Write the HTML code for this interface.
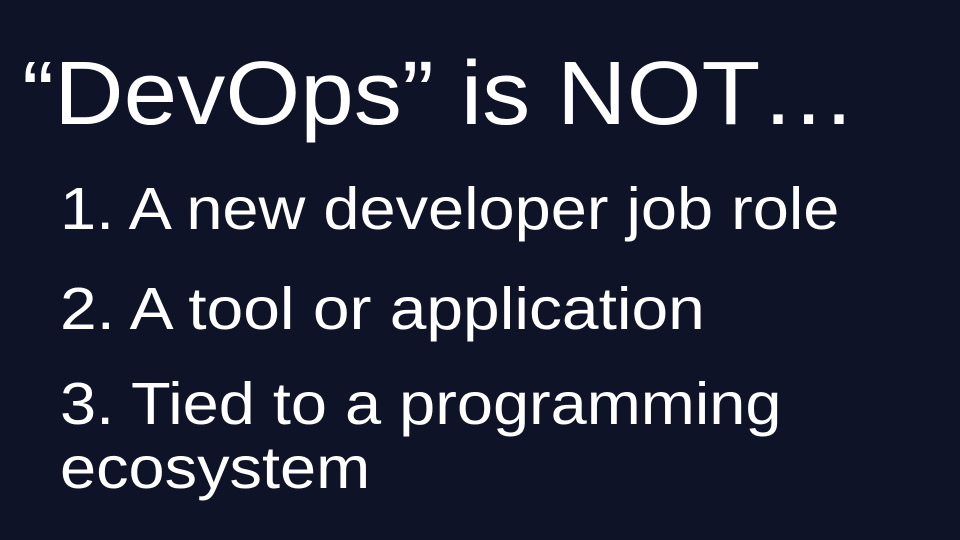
<!DOCTYPE html>
<html><head><meta charset="utf-8"><style>
body{margin:0;width:960px;height:540px;background:#0e1328;overflow:hidden;position:relative;font-family:"Liberation Sans",Arial,sans-serif;color:#fff}
div{position:absolute;line-height:1;white-space:nowrap;transform-origin:0 0}
.t{font-size:90px;left:22px;top:49px;transform:scaleX(1.07)}
.l{font-size:59px;left:60px;transform:scaleX(1.1)}
</style></head><body>
<div class="t">“DevOps” is NOT…</div>
<div class="l" style="top:180px">1. A new developer job role</div>
<div class="l" style="top:280px;transform:scaleX(1.117)">2. A tool or application</div>
<div class="l" style="top:375px">3. Tied to a programming</div>
<div class="l" style="top:439px">ecosystem</div>
</body></html>
